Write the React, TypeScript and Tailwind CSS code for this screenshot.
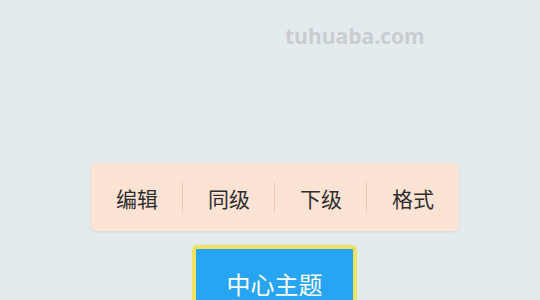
export default function App() {
  const items = ["编辑", "同级", "下级", "格式"];
  return (
    <div
      className="w-[540px] h-[300px] overflow-hidden bg-[#e4ebef] flex flex-col items-center"
      style={{ fontFamily: '"Noto Sans CJK SC", "Noto Sans", sans-serif' }}
    >
      <div
        className="shrink-0 self-start ml-[285px] mt-[20px] text-[21px] leading-[32px] font-bold text-[#c9cdd1]"
        style={{ fontFamily: '"Open Sans", "Noto Sans", sans-serif' }}
      >
        tuhuaba.com
      </div>
      <div className="shrink-0 mt-[111px] ml-[10px] w-[368px] h-[68px] rounded-[5px] bg-[#fde3d4] shadow-[0_1px_3px_rgba(0,0,0,0.08)] flex items-center">
        {items.map((t, i) => (
          <div key={t} className="flex-1 flex items-center h-full relative">
            <div className="flex-1 text-center text-[21px] leading-[30px] pt-[2px] text-[#2f2f2f]">{t}</div>
            {i < items.length - 1 && (
              <div className="absolute right-0 top-[19px] w-px h-[31px] bg-[#ecc9b6]" />
            )}
          </div>
        ))}
      </div>
      <div className="shrink-0 mt-[14px] ml-[9px] w-[165px] h-[70px] rounded-[5px] border-[4px] border-[#f2e262] bg-[#27a4f2] flex items-start justify-center pt-[19px]">
        <span className="text-[24px] leading-[32px] text-white">中心主题</span>
      </div>
    </div>
  );
}
